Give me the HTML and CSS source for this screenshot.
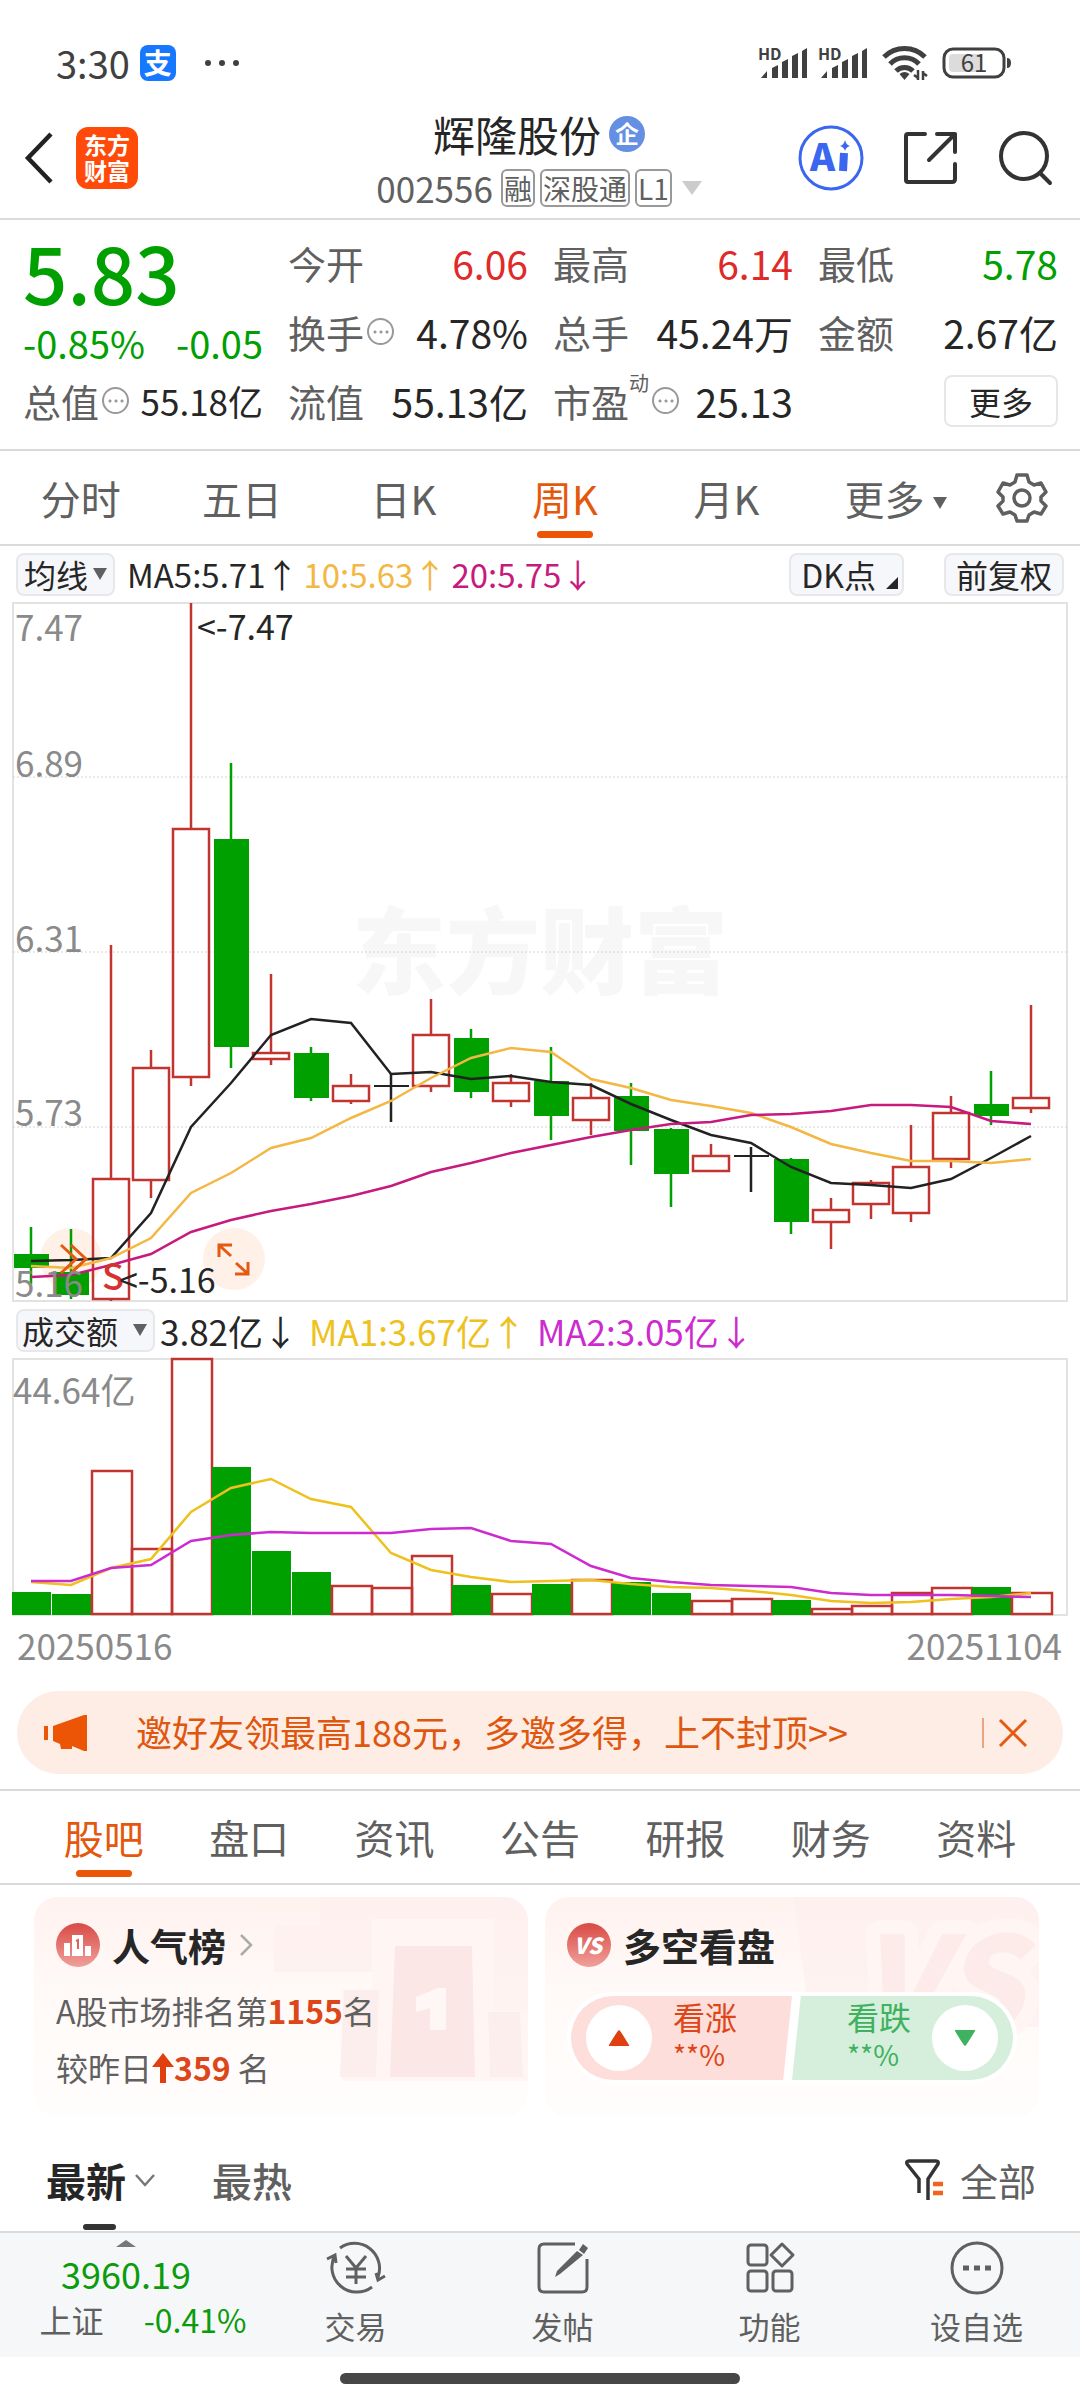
FILE: index.html
```html
<!DOCTYPE html>
<html lang="zh-CN">
<head>
    <meta charset="UTF-8">
    <meta name="viewport" content="width=device-width, initial-scale=1.0">
    <title>辉隆股份 002556</title>
    <link rel="stylesheet" href="styles.css">
</head>
<body>
    <div class="status-bar">
        <span class="clock">3:30</span>
        <span class="pay-badge">支</span>
        <svg class="status-dots" width="36" height="8" viewBox="0 0 36 8"><circle cx="4" cy="4" r="3"/><circle cx="18" cy="4" r="3"/><circle cx="32" cy="4" r="3"/></svg>
        <div class="status-right">
            <svg width="50" height="34" viewBox="0 0 50 34"><text class="hd" x="0" y="14">HD</text><path class="bars" d="M3 32l6-7v7zM14 32V22l6-3v13zM24 32V16l6-3v19zM34 32V10l6-3v25zM44 32V5l5-3v30z"/></svg>
            <svg width="50" height="34" viewBox="0 0 50 34"><text class="hd" x="0" y="14">HD</text><path class="bars" d="M3 32l6-7v7zM14 32V22l6-3v13zM24 32V16l6-3v19zM34 32V10l6-3v25zM44 32V5l5-3v30z"/></svg>
            <svg width="54" height="36" viewBox="-4 0 54 36"><path class="wave" d="M2 12a29 29 0 0 1 41 0M8 19a20 20 0 0 1 29 0M14 26a12 12 0 0 1 17 0"/><path fill="#404040" d="M22.500 35l-5-6q5-4 10 0z"/><path d="M36 25v10M36 33l-4-3M41 35V26M41 28l4 3" fill="none" stroke="#404040" stroke-width="2.500"/></svg>
            <svg width="70" height="34" viewBox="0 0 70 34"><rect x="2" y="3" width="60" height="28" rx="9" fill="#fff" stroke="#404040" stroke-width="3"/><path fill="#dcdcdc" d="M11 8h29v18H11q-4 0-4-4V12q0-4 4-4z"/><path fill="#404040" d="M65 12q4 0 4 5t-4 5z"/><text class="battery" x="32" y="26" text-anchor="middle">61</text></svg>
        </div>
    </div>

    <header class="header">
        <div class="header-left">
            <button class="icon-btn" aria-label="返回"><svg width="30" height="52" viewBox="0 0 30 52"><path d="M27 2L4 26l23 24" fill="none" stroke="#222" stroke-width="4.500"/></svg></button>
            <span class="brand">东方<br>财富</span>
        </div>
        <div class="header-title">
            <h1>辉隆股份<span class="corp">企</span></h1>
            <div class="code-line">
                <span class="code">002556</span>
                <span class="tag">融</span><span class="tag">深股通</span><span class="tag">L1</span>
                <span class="caret caret-light"></span>
            </div>
        </div>
        <div class="header-right">
            <button class="icon-btn" aria-label="AI">
                <svg width="66" height="66" viewBox="0 0 66 66"><circle cx="33" cy="33" r="31" fill="none" stroke="#3a66f0" stroke-width="3"/><text class="ai" x="12" y="46">A</text><path d="M46 28l-1 18" stroke="#3a66f0" stroke-width="8"/><path d="M47 15q1 5 5 6-4 1-5 5-1-4-5-5 4-1 5-6z" fill="#3a66f0"/></svg>
            </button>
            <button class="icon-btn" aria-label="分享">
                <svg width="56" height="56" viewBox="0 0 56 56"><path d="M22 4H5q-2 0-2 2v44q0 2 2 2h44q3 0 3-3V34M34 4h18v18M52 4L26 30" fill="none" stroke="#333" stroke-width="4" stroke-linecap="round" stroke-linejoin="round"/></svg>
            </button>
            <button class="icon-btn" aria-label="搜索">
                <svg width="56" height="56" viewBox="0 0 56 56"><circle cx="26" cy="26" r="23" fill="none" stroke="#333" stroke-width="4"/><path d="M42 43l10 10" stroke="#333" stroke-width="4" stroke-linecap="round"/></svg>
            </button>
        </div>
    </header>

    <section class="quote">
        <div class="price">
            <div class="last">5.83</div>
            <div class="change"><span>-0.85%</span><span>-0.05</span></div>
        </div>
        <div class="cell"><span class="name">今开</span><span class="up">6.06</span></div>
        <div class="cell"><span class="name">最高</span><span class="up">6.14</span></div>
        <div class="cell"><span class="name">最低</span><span class="down">5.78</span></div>
        <div class="cell"><span class="name">换手<i class="tip"></i></span><span>4.78%</span></div>
        <div class="cell"><span class="name">总手</span><span>45.24万</span></div>
        <div class="cell"><span class="name">金额</span><span>2.67亿</span></div>
        <div class="cell tight"><span class="name">总值<i class="tip"></i></span><span>55.18亿</span></div>
        <div class="cell"><span class="name">流值</span><span>55.13亿</span></div>
        <div class="cell"><span class="name">市盈<sup>动</sup><i class="tip"></i></span><span>25.13</span></div>
        <div class="cell end"><button class="more-btn">更多</button></div>
    </section>

    <nav class="periods">
        <button>分时</button>
        <button>五日</button>
        <button>日K</button>
        <button class="active">周K</button>
        <button>月K</button>
        <button class="wide">更多<span class="caret"></span></button>
        <button class="gear" aria-label="设置">
            <svg width="50" height="50" viewBox="0 0 50 50"><path d="M20 2h10l2 7 5 3 7-2 5 9-5 5v4l5 5-5 8-7-2-5 3-2 6H20l-2-6-5-3-7 2-5-8 5-5v-4l-5-5 5-9 7 2 5-3z" fill="none" stroke="#5f5f5f" stroke-width="3.500" stroke-linejoin="round"/><circle cx="25" cy="25" r="8" fill="none" stroke="#5f5f5f" stroke-width="3.500"/></svg>
        </button>
    </nav>

    <main>
        <div class="indicator">
            <label class="pick"><select aria-label="主图指标"><option>均线</option></select><span class="caret"></span></label>
            <span class="ma ma-first">MA5:5.71↑</span>
            <span class="ma yellow">10:5.63↑</span>
            <span class="ma pink">20:5.75↓</span>
            <button class="chip dk">DK点</button>
            <button class="chip">前复权</button>
        </div>
        <div class="chart">
            <svg id="kline" viewBox="12 601 1056 700"></svg>
        </div>
        <div class="indicator volume-line">
            <label class="pick pick-wide"><select aria-label="副图指标"><option>成交额</option></select><span class="caret"></span></label>
            <span class="ma">3.82亿↓</span>
            <span class="ma gold">MA1:3.67亿↑</span>
            <span class="ma violet">MA2:3.05亿↓</span>
        </div>
        <div class="chart">
            <svg id="volume" viewBox="12 1357 1056 258"></svg>
        </div>
        <div class="dates"><span>20250516</span><span>20251104</span></div>

        <div class="banner">
            <svg class="horn" width="44" height="38" viewBox="0 0 44 38"><path fill="#eb5505" d="M0 12h4v14H0zM9 12L40 1h3v36h-3l-12-5v3H17l-1-5-7-3z"/></svg>
            <a href="#">邀好友领最高188元，多邀多得，上不封顶&gt;&gt;</a>
            <button class="close" aria-label="关闭"><svg width="30" height="30" viewBox="0 0 30 30"><path d="M2 2l26 26M28 2L2 28" stroke="#e55a13" stroke-width="3"/></svg></button>
        </div>

        <nav class="sections">
            <button class="active">股吧</button>
            <button>盘口</button>
            <button>资讯</button>
            <button>公告</button>
            <button>研报</button>
            <button>财务</button>
            <button>资料</button>
        </nav>

        <div class="cards">
            <article class="card">
                <svg class="decor" width="254" height="220" viewBox="0 0 254 220">
                    <path fill="#fdeeec" opacity=".6" d="M46 0h208v180H130V75H0V28h46z"/>
                    <path fill="#fff6f4" d="M98 22h122v92h34v70H68V92h30z"/>
                    <path fill="#fbe8e6" d="M121 49h77l3 131h-85z"/>
                    <path fill="#fceeec" d="M70 93h35l-3 87H66zM214 115h32l3 65h-33z"/>
                    <path fill="#fff7f6" d="M142 100l22-9h8v42h-16v-22l-14 4z"/>
                    <path fill="#fff7f6" d="M156 110h16v23h-16z"/>
                </svg>
                <h2>
                    <svg width="44" height="44" viewBox="0 0 44 44"><defs><linearGradient id="badge" x2="0" y2="1"><stop offset="0" stop-color="#d84a45"/><stop offset="1" stop-color="#f0a09b"/></linearGradient></defs><circle cx="22" cy="22" r="22" fill="url(#badge)"/><path fill="#fff" d="M16 12h11v21H16zM8 20h6v13H8zM29 23h6v10h-6z"/><path d="M20 18l2-1v9" fill="none" stroke="#e0625c" stroke-width="2"/></svg>
                    <span>人气榜</span>
                    <svg width="16" height="24" viewBox="0 0 16 24"><path d="M3 2l10 10L3 22" fill="none" stroke="#aaa" stroke-width="2.500"/></svg>
                </h2>
                <p>A股市场排名第<b>1155</b>名</p>
                <p>较昨日<svg width="22" height="30" viewBox="0 0 22 30"><path fill="#e0400f" d="M11 0l11 14h-8v16H8V14H0z"/></svg><b>359</b> 名</p>
            </article>
            <article class="card">
                <svg class="decor" width="254" height="220" viewBox="0 0 254 220">
                    <path fill="#fdeeec" opacity=".6" d="M8 0h246v130H26z"/>
                    <text class="vs-back" x="72" y="134">VS</text>
                </svg>
                <h2>
                    <svg width="44" height="44" viewBox="0 0 44 44"><circle cx="22" cy="22" r="22" fill="url(#badge)"/><text class="vs" x="21" y="31" text-anchor="middle">VS</text></svg>
                    <span>多空看盘</span>
                </h2>
                <div class="vote">
                    <button class="vote-up">
                        <span class="knob"><svg width="24" height="20" viewBox="0 0 24 20"><path fill="#e0400f" d="M12 2q1 0 10 15v1H2v-1Q11 2 12 2z"/></svg></span>
                        <span class="vote-text">看涨<small>**%</small></span>
                    </button>
                    <button class="vote-down">
                        <span class="vote-text">看跌<small>**%</small></span>
                        <span class="knob"><svg width="24" height="20" viewBox="0 0 24 20"><path fill="#3fb15f" d="M12 18q1 0 10-15V2H2v1q9 15 10 15z"/></svg></span>
                    </button>
                </div>
            </article>
        </div>

        <div class="feed-tabs">
            <button class="active">最新<svg width="22" height="14" viewBox="0 0 22 14"><path d="M2 2l9 10 9-10" fill="none" stroke="#777" stroke-width="2.500"/></svg></button>
            <button>最热</button>
            <button class="filter">
                <svg width="42" height="42" viewBox="0 0 42 42"><path d="M15 34V20L3 5q-1-3 2-3h27q3 0 2 3L24 20v21" fill="none" stroke="#333" stroke-width="3.500"/><path d="M29 25h10M29 34h10" stroke="#f0641e" stroke-width="4.500"/></svg>
                全部
            </button>
        </div>
    </main>

    <nav class="bottom-nav">
        <a class="index" href="#">
            <span class="caret-up"></span>
            <span class="point">3960.19</span>
            <span class="index-row"><span>上证</span><em>-0.41%</em></span>
        </a>
        <a href="#">
            <svg width="60" height="54" viewBox="0 0 60 54"><path d="M14 7a25 25 0 0 1 38 29M46 46A25 25 0 0 1 9 14M1 18l8-4 1 8M59 35l-7 4-2-7M20 15l10 12 10-12M20 28h20M20 36h20M30 27v16"/></svg>
            交易
        </a>
        <a href="#">
            <svg width="60" height="54" viewBox="0 0 60 54"><path d="M42 3H11q-5 0-5 5v38q0 5 5 5h38q5 0 5-5V18"/><path d="M50 3l5 4-4 6-5-4zM44 10l6 4-23 19-5 3 2-6z" fill="#606060" stroke="none"/></svg>
            发帖
        </a>
        <a href="#">
            <svg width="60" height="54" viewBox="0 0 60 54"><rect x="8" y="4" width="19" height="20" rx="3"/><rect x="8" y="30" width="19" height="20" rx="3"/><rect x="33" y="30" width="19" height="20" rx="3"/><path d="M42 3l11 11-11 11-11-11z" stroke-linejoin="round"/></svg>
            功能
        </a>
        <a href="#">
            <svg width="60" height="54" viewBox="0 0 60 54"><circle cx="30" cy="27" r="25"/><path d="M16 27h6M27 27h6M38 27h6" stroke-width="5"/></svg>
            设自选
        </a>
    </nav>
    <div class="home-bar"><span></span></div>

    <script>
        // [type, high, open/close top, open/close bottom, low] in chart units
        const candles = [
            ['g', 1226, 1253, 1267, 1283], ['g', 1228, 1271, 1294, 1298], ['r', 944, 1178, 1298, 1300],
            ['r', 1049, 1067, 1179, 1197], ['r', 602, 828, 1076, 1085], ['g', 762, 838, 1046, 1067],
            ['r', 973, 1052, 1058, 1064], ['g', 1046, 1052, 1097, 1100], ['r', 1073, 1085, 1100, 1103],
            ['k', 1072, 1085, 1085, 1121], ['r', 998, 1034, 1085, 1091], ['g', 1028, 1037, 1091, 1097],
            ['r', 1073, 1082, 1100, 1106], ['g', 1046, 1080, 1115, 1139], ['r', 1082, 1097, 1119, 1134],
            ['g', 1082, 1095, 1130, 1164], ['g', 1127, 1128, 1173, 1206], ['r', 1143, 1155, 1170, 1170],
            ['k', 1146, 1155, 1155, 1191], ['g', 1157, 1158, 1221, 1233], ['r', 1197, 1209, 1221, 1248],
            ['r', 1179, 1182, 1203, 1218], ['r', 1124, 1166, 1212, 1221], ['r', 1095, 1112, 1158, 1167],
            ['g', 1070, 1103, 1115, 1124], ['r', 1004, 1097, 1107, 1112]
        ];
        const ma5 = [1260, 1259, 1257, 1212, 1126, 1082, 1034, 1018, 1022, 1073, 1071, 1078, 1075, 1081, 1084, 1103, 1119, 1134, 1142, 1166, 1182, 1184, 1187, 1178, 1157, 1135];
        const ma10 = [1265, 1267, 1257, 1237, 1192, 1172, 1147, 1137, 1117, 1100, 1077, 1057, 1047, 1051, 1078, 1087, 1099, 1105, 1112, 1126, 1143, 1152, 1160, 1160, 1162, 1158];
        const ma20 = [1276, 1274, 1264, 1253, 1231, 1219, 1210, 1203, 1195, 1185, 1171, 1162, 1152, 1144, 1136, 1129, 1123, 1121, 1114, 1113, 1110, 1104, 1104, 1106, 1120, 1123];
        const volumes = [1591, 1593, 1470, 1548, 1358, 1466, 1550, 1571, 1585, 1587, 1555, 1584, 1593, 1583, 1579, 1581, 1592, 1600, 1598, 1599, 1608, 1605, 1592, 1587, 1586, 1592];
        const volumeTypes = 'ggrrrgggrrrgrgrggrrgrrrrgr';
        const volMa1 = [1581, 1584, 1567, 1558, 1511, 1487, 1478, 1498, 1506, 1552, 1569, 1576, 1581, 1580, 1579, 1583, 1586, 1587, 1590, 1594, 1600, 1602, 1601, 1598, 1596, 1592];
        const volMa2 = [1580, 1580, 1567, 1564, 1540, 1534, 1531, 1532, 1532, 1532, 1528, 1527, 1540, 1543, 1565, 1577, 1581, 1584, 1585, 1586, 1592, 1594, 1594, 1594, 1595, 1596];
        const colors = { r: '#c13531', g: '#00a000', k: '#222' };

        function line(values, color) {
            const points = values.map((y, i) => (31 + i * 40) + ',' + y).join(' ');
            return `<polyline points="${points}" fill="none" stroke="${color}" stroke-width="2.5"/>`;
        }

        function box(type, x, y, w, h) {
            if (type === 'g') return `<rect x="${x}" y="${y}" width="${w}" height="${h}" fill="${colors.g}"/>`;
            return `<rect x="${x}" y="${y}" width="${w}" height="${h}" fill="none" stroke="${colors.r}" stroke-width="2.5"/>`;
        }

        function drawKline() {
            let out = '<text class="watermark" x="352" y="986">东方财富</text>';
            out += '<rect class="frame" x="13" y="602" width="1054" height="698"/>';
            [776, 951, 1126].forEach(y => { out += `<path class="grid" d="M13 ${y}H1067"/>`; });
            out += '<circle class="bubble" cx="71" cy="1258" r="31"/><circle class="bubble" cx="234" cy="1258" r="31"/>';
            candles.forEach(([type, high, top, bottom, low], i) => {
                const x = 31 + i * 40;
                out += `<path d="M${x} ${high}V${top}M${x} ${bottom}V${low}" stroke="${colors[type]}" stroke-width="2.5"/>`;
                if (type === 'k') out += `<path d="M${x - 17} ${top}h35M${x} ${high}V${low}" stroke="${colors.k}" stroke-width="2"/>`;
                else if (type === 'g') out += box(type, x - 17, top, 35, bottom - top);
                else out += box(type, x - 18, top, 36, bottom - top);
            });
            out += line(ma5, '#222') + line(ma10, '#f3b744') + line(ma20, '#c71a7e');
            out += '<path class="mark" d="M61 1244l15 14-15 14M71 1244l15 14-15 14M231 1255l-11-10M219 1256v-12h13M236 1262l11 10M235 1273h13v-12"/>';
            [['7.47', 640], ['6.89', 776], ['6.31', 951], ['5.73', 1125], ['5.16', 1296]].forEach(([label, y]) => {
                out += `<text class="axis" x="15" y="${y}">${label}</text>`;
            });
            out += '<text class="sell" x="102" y="1289">S</text>';
            out += '<text class="peak" x="197" y="639">&lt;-7.47</text><text class="peak" x="119" y="1292">&lt;-5.16</text>';
            document.getElementById('kline').innerHTML = out;
        }

        function drawVolume() {
            let out = '<rect class="frame" x="13" y="1358" width="1054" height="256"/>';
            volumes.forEach((top, i) => {
                const type = volumeTypes[i];
                const x = 12 + i * 40;
                out += type === 'g' ? box(type, x, top, 39, 1614 - top) : box(type, x, top, 40, 1613 - top);
            });
            out += line(volMa1, '#eec11c') + line(volMa2, '#cb2bcf');
            out += '<text class="axis" x="13" y="1403">44.64亿</text>';
            document.getElementById('volume').innerHTML = out;
        }

        drawKline();
        drawVolume();
    </script>
</body>
</html>
```
FILE: styles.css
```css
* { box-sizing: border-box; }
body { margin: 0; background: #fff; color: #262626; font-family: "Noto Sans CJK SC", "Noto Sans", sans-serif; font-size: 32px; }
button, select { font: inherit; color: inherit; background: none; border: 0; padding: 0; margin: 0; }
a { color: inherit; text-decoration: none; }
h1, h2, p { margin: 0; font-weight: 400; }
svg { display: block; overflow: visible; }
.icon-btn { display: block; }
.caret { display: inline-block; border: 7px solid transparent; border-top: 12px solid #606060; border-bottom: 0; }
.caret-light { border-width: 14px 10px 0; border-top-color: #ccc; }

/* status bar */
.status-bar { display: flex; align-items: center; padding: 38px 68px 16px 56px; line-height: 50px; color: #404040; font-size: 38px; }
.pay-badge { width: 36px; height: 36px; margin: 0 28px 0 10px; border-radius: 8px; background: #1677ff; color: #fff; font-size: 28px; font-weight: 700; line-height: 34px; text-align: center; }
.status-dots { fill: #404040; }
.status-right { display: flex; align-items: center; gap: 10px; margin-left: auto; }
.hd { font-size: 16px; font-weight: 700; fill: #404040; }
.bars { fill: #404040; }
.wave { fill: none; stroke: #404040; stroke-width: 5; }
.battery { font-size: 24px; fill: #404040; }

/* header */
.header { display: grid; grid-template-columns: 1fr auto 1fr; align-items: center; padding: 0 26px 6px 24px; border-bottom: 2px solid #dadada; }
.header-left { display: flex; align-items: center; gap: 22px; }
.brand { width: 62px; height: 62px; padding-top: 4px; border-radius: 12px; background: #ff4a0a; color: #fff; font-size: 23px; font-weight: 700; line-height: 26px; text-align: center; }
.header-title h1 { display: flex; align-items: center; justify-content: center; gap: 8px; font-size: 42px; line-height: 60px; }
.corp { width: 36px; height: 36px; border-radius: 50%; background: #648fe3; color: #fff; font-size: 24px; font-weight: 700; line-height: 34px; text-align: center; }
.code-line { display: flex; align-items: center; justify-content: center; gap: 5px; height: 48px; color: #606060; }
.code { margin-right: 3px; font-size: 35px; line-height: 48px; }
.tag { padding: 0 1px; border: 2px solid #999; border-radius: 6px; font-size: 28px; line-height: 34px; }
.code-line .caret { margin-left: 5px; }
.header-right { display: flex; align-items: center; justify-content: flex-end; gap: 39px; }
.ai { font-size: 38px; font-weight: 900; fill: #3a66f0; }

/* quote */
.quote { display: grid; grid-template-columns: repeat(4, 1fr); grid-template-rows: repeat(3, 69px); column-gap: 25px; padding: 8px 22px 14px 23px; border-bottom: 2px solid #dadada; font-size: 39px; }
.price { grid-row: span 2; color: #00a000; }
.last { font-size: 78px; font-weight: 500; line-height: 86px; }
.change { display: flex; justify-content: space-between; line-height: 58px; font-size: 38px; }
.cell { display: flex; align-items: center; justify-content: space-between; white-space: nowrap; }
.cell .name { display: flex; align-items: center; color: #606060; font-size: 38px; }
.up { color: #e02a2a; }
.down { color: #00a000; }
.cell.tight { font-size: 35px; }
.cell.end { justify-content: flex-end; }
.cell sup { align-self: flex-start; font-size: 20px; line-height: 20px; }
.tip { display: block; width: 27px; height: 27px; margin-left: 3px; border: 2px solid #999; border-radius: 50%; background: radial-gradient(circle at 6px 12px, #999 1px, transparent 2px), radial-gradient(circle at 12px 12px, #999 1px, transparent 2px), radial-gradient(circle at 18px 12px, #999 1px, transparent 2px); }
.more-btn { width: 114px; border: 2px solid #e6e7ea; border-radius: 8px; font-size: 32px; line-height: 48px; }

/* period tabs */
.periods { display: flex; height: 95px; border-bottom: 2px solid #dadada; color: #606060; font-size: 40px; }
.periods button { position: relative; flex: 1; line-height: 88px; }
.periods .wide { flex: 0 0 177px; }
.periods .caret { margin-left: 8px; vertical-align: 6px; }
.periods .gear { display: flex; align-items: center; flex: 0 0 96px; padding-left: 13px; }
.periods .active, .sections .active { color: #e4580d; }
.periods .active::after, .sections .active::after { content: ""; position: absolute; left: 50%; bottom: 6px; width: 56px; height: 7px; margin-left: -28px; border-radius: 4px; background: #eb5505; }

/* charts */
.indicator { display: flex; align-items: center; gap: 5px; height: 56px; padding: 0 16px; white-space: nowrap; font-size: 33px; }
.pick, .chip { height: 43px; border: 2px solid #e6e8ec; border-radius: 8px; background: #f6f7fa; font-size: 32px; line-height: 37px; }
.pick { display: flex; align-items: center; justify-content: space-between; width: 99px; padding: 0 6px; }
.pick select { appearance: none; line-height: 37px; }
.pick-wide { width: 139px; padding-left: 4px; }
.ma-first { margin-left: 7px; }
.yellow { color: #f3b744; }
.pink { color: #c71a7e; }
.chip { padding: 0 10px; }
.dk { position: relative; margin: 0 35px 0 auto; padding-right: 26px; }
.dk::after { content: ""; position: absolute; right: 4px; bottom: 5px; border: 6px solid #262626; border-top-color: transparent; border-left-color: transparent; }
.volume-line { font-size: 35px; }
.volume-line .gold { margin-left: 6px; color: #eec11c; }
.volume-line .violet { margin-left: 6px; color: #cb2bcf; }
.chart { margin: 0 12px; }
.chart svg { width: 100%; height: auto; }
.frame { fill: none; stroke: #e2e2e2; stroke-width: 2; }
.grid { stroke: #d4d4d4; stroke-width: 1; stroke-dasharray: 2 2; }
.watermark { font-size: 94px; font-weight: 900; fill: #f7f7f7; }
.axis { font-size: 35px; fill: #8a8a8a; }
.peak { font-size: 34px; fill: #262626; }
.sell { font-size: 36px; font-weight: 500; fill: #d63330; }
.bubble { fill: #fff0e8; }
.mark { fill: none; stroke: #e55a13; stroke-width: 3; }
.dates { display: flex; justify-content: space-between; padding: 6px 18px 23px 17px; color: #8a8a8a; font-size: 35px; line-height: 46px; }

/* invite banner */
.banner { display: flex; align-items: center; height: 83px; margin: 0 17px 15px; padding: 0 35px 0 27px; border-radius: 42px; background: #fdede5; color: #df560f; font-size: 36px; }
.banner a { margin-left: 48px; line-height: 76px; padding-bottom: 3px; }
.close { margin-left: auto; padding-left: 14px; border-left: 2px solid #e9a482; }

/* section tabs */
.sections { display: flex; height: 96px; padding: 0 31px; border-top: 2px solid #dadada; border-bottom: 2px solid #dadada; color: #606060; font-size: 40px; }
.sections button { position: relative; flex: 1; line-height: 88px; }

/* cards */
.cards { display: grid; grid-template-columns: 1fr 1fr; gap: 17px; padding: 12px 41px 0 34px; }
.card { position: relative; overflow: hidden; height: 220px; padding: 18px 22px; border-radius: 24px; background: linear-gradient(#fff2ef, #fffaf8 45%, #fffdfc); }
.decor { position: absolute; top: 0; right: 0; }
.card h2, .card p, .vote { position: relative; }
.card h2 { display: flex; align-items: center; gap: 12px; font-size: 38px; font-weight: 700; line-height: 60px; }
.card p { display: flex; align-items: center; color: #606060; font-size: 32px; line-height: 57px; white-space: pre; }
.card h2 + p { margin-top: 7px; }
.card b { color: #dc4618; font-weight: 700; }
.vs { font-size: 22px; font-style: italic; font-weight: 900; fill: #fff; }
.vs-back { font-size: 130px; font-style: italic; font-weight: 900; fill: #fcebe9; stroke: #fff5f3; stroke-width: 28px; stroke-linejoin: round; paint-order: stroke; }
.vote { display: grid; grid-template-columns: 1fr 1fr; height: 92px; margin: 17px 0 0; border: 4px solid #fff; border-radius: 46px; overflow: hidden; background: #fff; }
.vote button { display: flex; align-items: center; gap: 21px; padding: 0 15px; text-align: left; }
.vote-up { background: #fddeda; color: #dc4618; clip-path: polygon(0 0, 100% 0, 96% 100%, 0 100%); }
.vote .vote-down { justify-content: flex-end; background: #d5efdc; color: #3fb15f; clip-path: polygon(4% 0, 100% 0, 100% 100%, 0 100%); }
.knob { display: flex; align-items: center; justify-content: center; width: 66px; height: 66px; border-radius: 50%; background: #fff; }
.vote-text { padding-bottom: 8px; font-size: 32px; line-height: 40px; }
.vote-text small { display: block; font-size: 28px; line-height: 36px; }

/* feed */
.feed-tabs { display: flex; align-items: center; height: 114px; padding: 12px 44px 0 46px; font-size: 40px; color: #606060; font-weight: 500; }
.feed-tabs button { position: relative; display: flex; align-items: center; gap: 8px; margin-right: 56px; line-height: 100px; }
.feed-tabs .active { color: #262626; font-weight: 700; }
.feed-tabs .active::after { content: ""; position: absolute; left: 37px; bottom: 0; width: 33px; height: 6px; border-radius: 3px; background: #333; }
.feed-tabs .filter { gap: 14px; margin: 0 0 0 auto; font-size: 38px; font-weight: 400; }

/* bottom nav */
.bottom-nav { display: flex; height: 126px; border-top: 2px solid #dadada; background: #f6f7f9; color: #606060; font-size: 31px; line-height: 46px; }
.bottom-nav a { flex: 1; display: flex; flex-direction: column; align-items: center; gap: 8px; padding-top: 8px; }
.bottom-nav svg { fill: none; stroke: #606060; stroke-width: 3; }
.bottom-nav .index { flex: 0 0 252px; gap: 0; padding: 7px 0 0; }
.caret-up { border: 10px solid transparent; border-top: 0; border-bottom: 7px solid #777; }
.point { color: #0b9b0b; font-size: 36px; line-height: 52px; }
.index-row { display: flex; gap: 40px; padding-left: 34px; font-size: 32px; line-height: 40px; }
.index-row em { color: #0b9b0b; font-style: normal; }
.home-bar { padding: 16px 0; }
.home-bar span { display: block; width: 37%; height: 11px; margin: 0 auto; border-radius: 6px; background: #474747; }
```
